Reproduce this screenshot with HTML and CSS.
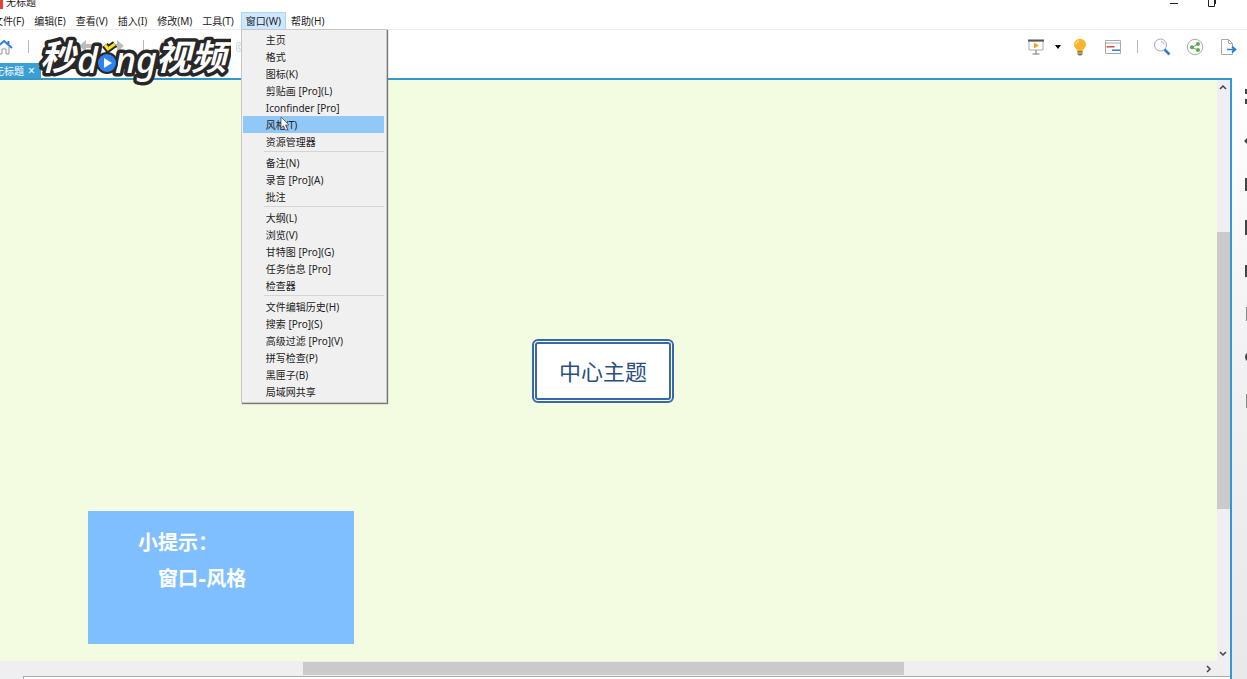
FILE: index.html
```html
<!DOCTYPE html>
<html lang="zh-CN">

<head>
  <meta charset="UTF-8">
  <meta name="viewport" content="width=device-width, initial-scale=1.0">
  <link rel="stylesheet" href="styles.css">
  <title>无标题</title>
</head>

<body>
  <header class="titlebar">
    <span class="app-icon"></span>
    <span class="app-title">无标题</span>
    <button class="win-btn" aria-label="最小化"><svg width="10" height="10" viewBox="0 0 10 10"><path d="M1 5.500h8" stroke="#222" fill="none"/></svg></button>
    <button class="win-btn" aria-label="还原"><svg width="10" height="10" viewBox="0 0 10 10"><path d="M1.500 1.500h6v7h-6zM3.500 0h5v6" stroke="#222" fill="none"/></svg></button>
  </header>

  <nav class="menubar">
    <button class="menu-btn">文件(F)</button>
    <button class="menu-btn">编辑(E)</button>
    <button class="menu-btn">查看(V)</button>
    <button class="menu-btn">插入(I)</button>
    <button class="menu-btn">修改(M)</button>
    <button class="menu-btn">工具(T)</button>
    <div class="menu-open">
      <button class="menu-btn active">窗口(W)</button>
      <div class="dropdown">
        <button class="item">主页</button>
        <button class="item">格式</button>
        <button class="item">图标(K)</button>
        <button class="item">剪贴画 [Pro](L)</button>
        <button class="item">Iconfinder [Pro]</button>
        <button class="item selected">风格(T)</button>
        <button class="item">资源管理器</button>
        <hr>
        <button class="item">备注(N)</button>
        <button class="item">录音 [Pro](A)</button>
        <button class="item">批注</button>
        <hr>
        <button class="item">大纲(L)</button>
        <button class="item">浏览(V)</button>
        <button class="item">甘特图 [Pro](G)</button>
        <button class="item">任务信息 [Pro]</button>
        <button class="item">检查器</button>
        <hr>
        <button class="item">文件编辑历史(H)</button>
        <button class="item">搜索 [Pro](S)</button>
        <button class="item">高级过滤 [Pro](V)</button>
        <button class="item">拼写检查(P)</button>
        <button class="item">黑匣子(B)</button>
        <button class="item">局域网共享</button>
        <svg class="cursor" width="10" height="16" viewBox="0 0 10 16"><path d="M1 1v11l2.500-2.300 2 4.500 2-.9-2-4.300H9z" fill="#fff" stroke="#555" stroke-width=".8"/></svg>
      </div>
    </div>
    <button class="menu-btn">帮助(H)</button>
  </nav>

  <div class="toolbar">
    <button class="tool home" aria-label="主页"><svg width="18" height="18" viewBox="0 0 18 18"><path d="M4 9v7h3v-5h4v5h3V9" fill="#f4f4f4" stroke="#999"/><path d="M1 10l8-7 8 7M13.500 3v3" fill="none" stroke="#2a7de1" stroke-width="2"/></svg></button>
    <span class="divider"></span>
    <button class="tool" aria-label="保存"><svg width="18" height="18" viewBox="0 0 18 18"><path d="M3 3h12v12H3z" fill="#dcebfa" stroke="#5b9be0"/></svg></button>
    <button class="tool" aria-label="撤销"><svg width="18" height="18" viewBox="0 0 18 18"><path d="M2 8l7-6v4h7v4H9v4z" fill="#bbb"/></svg></button>
    <button class="tool" aria-label="重做"><svg width="18" height="18" viewBox="0 0 18 18"><path d="M14 8L7 2v4H1v4h6v4z" fill="#bbb"/></svg></button>
    <span class="divider"></span>
    <button class="tool" aria-label="主题"><svg width="18" height="18" viewBox="0 0 18 18"><path d="M3 4h12v9H3z" fill="#fff" stroke="#aaa"/></svg></button>
    <button class="tool" aria-label="联系"><svg width="18" height="18" viewBox="0 0 18 18"><path d="M3 14a7 7 0 0 1 11-8" fill="none" stroke="#2a7de1" stroke-width="2"/></svg></button>
    <button class="tool" aria-label="外框"><svg width="18" height="18" viewBox="0 0 18 18"><rect x="11.500" y="4.500" width="12" height="9" rx="2" fill="#eef6fc" stroke="#c3def2"/><path d="M14 7h4v4h-4z" fill="#fff" stroke="#cfdcc0"/></svg></button>
    <span class="spacer"></span>
    <button class="tool" aria-label="演示"><svg width="18" height="18" viewBox="0 0 18 18"><path d="M2 3h14v9H2z" fill="#fff" stroke="#aaa"/><path d="M1 2.500h16" stroke="#555" stroke-width="2"/><path d="M7 4.500v6l5-3z" fill="#f5a020"/><path d="M9 12v4M5.500 16h7" stroke="#777" fill="none"/></svg></button>
    <button class="tool arrow" aria-label="更多"><svg width="8" height="6" viewBox="0 0 8 6"><path d="M1 1h6L4 5z" fill="#000"/></svg></button>
    <button class="tool" aria-label="头脑风暴"><svg width="18" height="18" viewBox="0 0 18 18"><path d="M9 .8a5.800 5.800 0 0 0-6 5.900c0 3 3 3.900 3.400 6.300h5.200C12 10.600 15 9.700 15 6.700A5.800 5.800 0 0 0 9 .8z" fill="#fbb52c"/><path d="M5 6a4 4 0 0 1 3-3" stroke="#ffe08a" stroke-width="1.500" fill="none"/><path d="M6.500 13h5v3.500l-1.500 1H8l-1.500-1z" fill="#8d7448"/><path d="M6.500 15h5" stroke="#d5c39a"/></svg></button>
    <button class="tool" aria-label="甘特图"><svg width="18" height="18" viewBox="0 0 18 18"><path d="M1.500 2.500h15v13h-15zM1.500 5h15" fill="#fff" stroke="#aaa"/><path d="M2.500 8.800h8" stroke="#df4b43" stroke-width="1.500"/><path d="M8 12.200h8" stroke="#287de0" stroke-width="1.500"/></svg></button>
    <span class="divider"></span>
    <button class="tool" aria-label="搜索"><svg width="18" height="18" viewBox="0 0 18 18"><circle cx="7.500" cy="7" r="6" fill="#fafcff" stroke="#aaa"/><path d="M8 3.500a3.500 3.500 0 0 1 3 3" fill="none" stroke="#8fc0ee"/><path d="M11.500 11.500l5 5" stroke="#287de0" stroke-width="2.500"/></svg></button>
    <button class="tool" aria-label="分享"><svg width="18" height="18" viewBox="0 0 18 18"><circle cx="9" cy="9" r="7.700" fill="#fff" stroke="#aaa"/><path d="M12 6L6 9.200l6 3" fill="none" stroke="#5aab52"/><g fill="#5aab52"><circle cx="12" cy="6" r="2"/><circle cx="6" cy="9.200" r="2"/><circle cx="12" cy="12" r="2"/></g></svg></button>
    <button class="tool" aria-label="导出"><svg width="18" height="18" viewBox="0 0 18 18"><path d="M2.500 1.500h7l4 4v11h-11zM9.500 1.500v4h4" fill="#fff" stroke="#aaa"/><path d="M8 11.500h8M13 8.500l3.500 3-3.500 3" fill="none" stroke="#287de0" stroke-width="1.700"/></svg></button>
  </div>

  <div class="tabs">
    <div class="tab">无标题 <button class="close" aria-label="关闭">×</button></div>
  </div>

  <main class="workspace">
    <section class="editor">
      <div class="canvas">
        <div class="topic">中心主题</div>
        <aside class="tip">
          <p>小提示：</p>
          <p class="path">窗口-风格</p>
        </aside>
      </div>
      <div class="vscroll">
        <svg width="12" height="14" viewBox="0 0 12 14"><path d="M3 9l3-3 3 3" fill="none" stroke="#444" stroke-width="1.500"/></svg>
        <div class="track"><div class="thumb"></div></div>
        <svg width="12" height="14" viewBox="0 0 12 14"><path d="M3 5l3 3 3-3" fill="none" stroke="#444" stroke-width="1.500"/></svg>
      </div>
      <div class="hscroll">
        <div class="track"><div class="thumb"></div></div>
        <svg width="14" height="12" viewBox="0 0 14 12"><path d="M5 3l3 3-3 3" fill="none" stroke="#444" stroke-width="1.500"/></svg>
      </div>
      <div class="status"></div>
    </section>
    <div class="sidebar">
      <svg width="3" height="340" viewBox="0 0 3 340" fill="#444"><path d="M1 11h2v5H1zM1 21h2v5H1zM0 63l3-3v6zM1 100h2v13H1zM1 142h2v15H1zM1 187h2v12H1z"/><circle cx="6" cy="279" r="5"/><path d="M2 229h1v14H2zM2 316h1v14H2z" fill="#888"/></svg>
    </div>
  </main>

  <svg class="logo" width="200" height="54" viewBox="0 0 200 54">
    <path d="M12 24h176v12H8z" fill="#272727"/>
    <text class="logo-cn" x="9" y="37">秒</text>
    <text class="logo-en" x="46" y="40">d</text>
    <text class="logo-en" x="84" y="40">ng</text>
    <text class="logo-cn" x="125" y="37">视频</text>
    <circle cx="76" cy="30" r="11" fill="#272727"/>
    <path d="M74 12l3 4 7-5" fill="none" stroke="#272727" stroke-width="7"/>
    <circle cx="76" cy="30" r="9" fill="#2f83f0"/>
    <path d="M73 25v10l8-5z" fill="#fff"/>
    <path d="M74 12l3 4 7-5" fill="none" stroke="#ffe022" stroke-width="3"/>
  </svg>
</body>

</html>
```
FILE: styles.css
```css
* {
  box-sizing: border-box;
}

body {
  margin: 0;
  height: 100vh;
  display: flex;
  flex-direction: column;
  overflow: hidden;
  position: relative;
  background: #fff;
  color: #222;
  font: 10px/16px "Noto Sans", "Noto Sans CJK SC", sans-serif;
}

button {
  padding: 0;
  border: 0;
  background: none;
  color: inherit;
  font: inherit;
}

svg {
  display: block;
}

.titlebar {
  display: flex;
  align-items: flex-end;
  height: 12px;
  padding-right: 30px;
}

.app-icon {
  width: 3px;
  height: 9px;
  margin-bottom: 3px;
  background: #e8413a;
}

.app-title {
  flex: 1;
  margin: 0 0 2px 3px;
}

.win-btn {
  margin: 0 0 4px 28px;
}

.menubar {
  display: flex;
  height: 18px;
  margin-left: -12px;
  border-bottom: 1px solid #eee;
}

.menu-btn {
  height: 18px;
  padding: 0 5px;
  white-space: nowrap;
}

.menu-open {
  position: relative;
  margin-left: 2px;
}

.menu-btn.active {
  background: #cce8ff;
  box-shadow: inset 0 0 0 1px #a9d6fa;
}

.dropdown {
  position: absolute;
  z-index: 2;
  top: 17px;
  left: 0;
  width: 146px;
  padding: 1px 2px 2px 1px;
  background: #f1f0f1;
  border: 1px solid #c8c8c8;
  box-shadow: 1px 1px 1px #777;
}

.item {
  display: block;
  width: 100%;
  height: 17px;
  padding-left: 23px;
  text-align: left;
  white-space: nowrap;
}

.item.selected {
  background: #90c8f8;
}

.dropdown hr {
  height: 1px;
  margin: 1px 0 2px 21px;
  border: 0;
  background: #d4d4d4;
}

.cursor {
  position: absolute;
  left: 38px;
  top: 86px;
}

.toolbar {
  display: flex;
  align-items: center;
  gap: 15px;
  height: 33px;
  padding-right: 10px;
}

.home {
  margin-left: -5px;
}

.arrow {
  margin: 0 -6px;
}

.divider {
  width: 1px;
  height: 13px;
  background: #bbb;
}

.spacer {
  flex: 1;
}

.tabs {
  display: flex;
  height: 15px;
}

.tab {
  display: flex;
  gap: 4px;
  flex: none;
  margin-left: -6px;
  padding-right: 6px;
  background: #3a9fd6;
  color: #fff;
  white-space: nowrap;
}

.close {
  font-size: 12px;
}

.workspace {
  flex: 1;
  display: flex;
  min-height: 0;
}

.editor {
  flex: 1;
  display: grid;
  grid-template-columns: 1fr 13px;
  grid-template-rows: 1fr 15px 3px;
  border-top: 2px solid #3399cc;
  border-right: 2px solid #3399d0;
  background: #efeef0;
}

.canvas {
  position: relative;
  background: #f3fce0;
}

/* topic and tip float freely on the map */
.topic {
  position: absolute;
  left: 532px;
  top: 259px;
  padding: 12px 22px;
  border: 5px double #3569a8;
  border-radius: 6px;
  background: #fff;
  color: #2c4f7d;
  font-size: 22px;
  line-height: 30px;
}

.tip {
  position: absolute;
  left: 88px;
  top: 431px;
  width: 266px;
  height: 133px;
  padding: 14px 50px;
  background: #80bfff;
  color: #fff;
  font-family: "DejaVu Sans", "Noto Sans CJK SC", sans-serif;
  font-size: 20px;
  font-weight: 700;
  line-height: 36px;
}

.tip p {
  margin: 0;
}

.tip .path {
  margin-left: 20px;
}

.vscroll {
  display: flex;
  flex-direction: column;
}

.hscroll {
  grid-column: 1 / -1;
  display: flex;
  align-items: center;
  padding-right: 14px;
}

.track {
  flex: 1;
}

.vscroll .thumb {
  height: 50%;
  margin-top: 138px;
  background: #cacaca;
}

.hscroll .thumb {
  width: 50%;
  height: 13px;
  margin-left: 303px;
  background: #cacaca;
}

.status {
  grid-column: 1 / -1;
  margin-left: 23px;
  border-top: 1px solid #aaa;
  border-left: 1px solid #aaa;
  background: #fff;
}

.sidebar {
  display: flex;
  justify-content: flex-end;
  width: 15px;
  background: linear-gradient(#fff, #f1f0f2 50%, #e9e9e9);
}

/* watermark over the toolbar */
.logo {
  position: absolute;
  left: 31px;
  top: 33px;
}

.logo text {
  fill: #fff;
  stroke: #272727;
  stroke-width: 7px;
  stroke-linejoin: round;
  paint-order: stroke;
  font-style: italic;
}

.logo-cn {
  font-size: 35px;
  font-weight: 700;
}

.logo-en {
  font-size: 36px;
  font-weight: 500;
}
```
